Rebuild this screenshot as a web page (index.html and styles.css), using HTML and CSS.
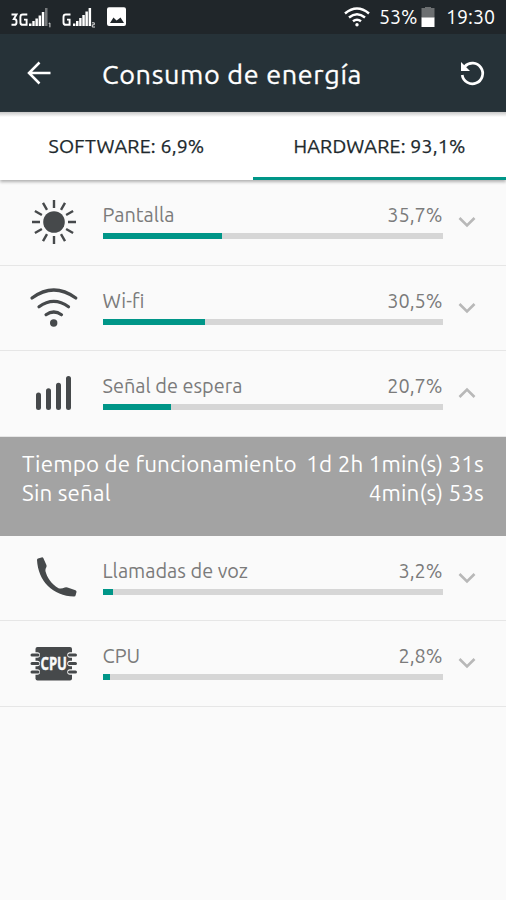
FILE: index.html
```html
<!DOCTYPE html>
<html lang="es">
<head>
<meta charset="utf-8">
<title>Consumo de energía</title>
<link rel="stylesheet" href="styles.css">
</head>
<body>
<div class="status">
  <svg class="signals" width="130" height="34" viewBox="0 0 130 34" fill="#fff">
    <g fill="none" stroke="#fff" stroke-width="1.9">
      <path d="M11.500 14.500h5L13.800 19q2.700 0 2.700 2.200v1.200q0 2.400-2.200 2.400h-2.800M27.300 14.500h-4.500q-2.400 0-2.400 2.400v5.500q0 2.400 2.400 2.400h3.800v-5.200h-2.600"/>
      <path d="M70.500 14.500h-4.600q-2.400 0-2.400 2.400v5.500q0 2.400 2.400 2.400h3.700v-5.200h-2.600"/>
    </g>
    <path d="M29 23.500h2.500V26H29zM32.300 21h2.400v5h-2.400zM35.400 18.500h2.500V26h-2.500zM38.600 15.500h2.500V26h-2.500zM41.800 12h2.500v14h-2.500z"/>
    <path d="M45 8h2.500v18H45z" fill="#777a7c"/>
    <path d="M73 23.500h2.400V26H73zM76 21h2.500v5H76zM79.200 18h2.400v8h-2.400zM82.300 15h2.500v11h-2.500zM85.400 11.500h2.500V26h-2.500zM88.600 8h2.500v18h-2.500z"/>
    <path d="M48.700 23.500l1.200-.5V27.300M92 22.800h2.300v2h-2V27h2.700" fill="none" stroke="#ddd"/>
    <path fill-rule="evenodd" d="M109 7.300h15q2 0 2 2V24q0 2-2 2h-15q-2 0-2-2V9.300q0-2 2-2zM110 23h14l-3.500-5.500-2.500 2-1.500 1-3-3z"/>
  </svg>
  <svg class="status-wifi" width="26" height="20" viewBox="0 0 26 20" fill="none" stroke="#fff" stroke-width="2.500">
    <path d="M1 6.500Q13-3.500 25 6.500M5 10.500q8-6.500 16 0M9 14.300q4-3.200 8 0"/><circle cx="13" cy="17.700" r="1.700" fill="#fff" stroke="none"/>
  </svg>
  <span class="battery-text">53%</span>
  <svg class="battery" width="14" height="22" viewBox="0 0 14 22"><path fill="#6c6f71" d="M4 1h6v1h3.500v10H.5V2H4z"/><path fill="#fff" d="M.5 11.500h13V21H.5z"/></svg>
  <span class="clock">19:30</span>
</div>
<header class="bar">
  <svg class="back" width="24" height="24" viewBox="0 0 24 24" fill="none" stroke="#fff" stroke-width="2.500"><path d="M23.500 12H2.500M12.500 1.500L2 12l10.500 10.500"/></svg>
  <h1 class="title">Consumo de energía</h1>
  <svg class="reset" width="26" height="26" viewBox="0 0 26 26"><path d="M5.800 6.500A10.300 10.300 0 1 1 3.200 15" fill="none" stroke="#fff" stroke-width="2.700"/><path fill="#fff" d="M2 2v9h9z"/></svg>
</header>
<nav class="tabs">
  <div class="tab"><span>SOFTWARE: 6,9%</span></div>
  <div class="tab active"><span>HARDWARE: 93,1%</span></div>
</nav>
<main>
  <section class="row">
    <svg class="icon" width="48" height="48" viewBox="0 0 48 48" stroke="#46494b" stroke-width="2.400"><circle cx="24" cy="24" r="10.800" fill="#46494b" stroke="none"/>
      <path d="M24 2v8M24 38v8M2 24h8M38 24h8M13 4.900l4 7M31 36.100l4 7M4.900 13l7 4M36.100 31l7 4M4.900 35l7-4M36.100 17l7-4M13 43.100l4-7M31 11.900l4-7"/></svg>
    <div class="body"><div class="line"><span>Pantalla</span><span>35,7%</span></div><div class="track"><div class="fill" style="width:35.2%"></div></div></div>
    <svg class="chev" width="18" height="12" viewBox="0 0 18 12"><path d="M1.500 2L9 9.500 16.500 2"/></svg>
  </section>
  <section class="row">
    <svg class="icon" width="48" height="48" viewBox="0 0 48 48" fill="none" stroke="#46494b" stroke-width="3.200" stroke-linecap="round"><path d="M2 14Q23.700-2 45.800 14M9 22.700q14.800-10.600 29.500 0M16 30.700q7.800-5.400 15.500 0"/><circle cx="23.700" cy="39" r="3.700" fill="#46494b" stroke="none"/></svg>
    <div class="body"><div class="line"><span>Wi-fi</span><span>30,5%</span></div><div class="track"><div class="fill" style="width:30.1%"></div></div></div>
    <svg class="chev" width="18" height="12" viewBox="0 0 18 12"><path d="M1.500 2L9 9.500 16.500 2"/></svg>
  </section>
  <section class="row">
    <svg class="icon" width="48" height="48" viewBox="0 0 48 48" stroke="#46494b" stroke-width="5" stroke-linecap="round"><path d="M8.500 26V38.500M18.500 21.700V38.500M28.500 16.200V38.500M38.500 9.500V38.500"/></svg>
    <div class="body"><div class="line"><span>Señal de espera</span><span>20,7%</span></div><div class="track"><div class="fill" style="width:20.2%"></div></div></div>
    <svg class="chev up" width="18" height="12" viewBox="0 0 18 12"><path d="M1.500 2L9 9.500 16.500 2"/></svg>
  </section>
  <div class="details">
    <div class="detail"><span>Tiempo de funcionamiento</span><span>1d 2h 1min(s) 31s</span></div>
    <div class="detail"><span>Sin señal</span><span>4min(s) 53s</span></div>
  </div>
  <section class="row">
    <svg class="icon" width="48" height="48" viewBox="0 0 48 48" fill="#46494b"><path d="M8 4.500Q7 4.500 7 6C8 27 23 42 44 42.500Q45.500 42.500 45.700 41L46.500 38Q46.700 36.700 45.500 36.200L37.500 33.500Q36 33 34.800 33.600Q31.500 35 28.500 34.200C21 30 17 23 15.400 17Q15.200 15 16.500 12.800Q16.800 11.800 16.300 10.800L13.300 4Q12.700 3 11.500 3.400z"/></svg>
    <div class="body"><div class="line"><span>Llamadas de voz</span><span>3,2%</span></div><div class="track"><div class="fill" style="width:3.1%"></div></div></div>
    <svg class="chev" width="18" height="12" viewBox="0 0 18 12"><path d="M1.500 2L9 9.500 16.500 2"/></svg>
  </section>
  <section class="row">
    <svg class="icon" width="48" height="48" viewBox="0 0 48 48"><rect x="5.500" y="8" width="36.500" height="33.500" rx="2" fill="#46494b"/>
      <path d="M2.300 16h5M2.300 24.500h5M2.300 33h5M40 16h5M40 24.500h5M40 33h5" stroke="#fafafa" stroke-width="5.500" stroke-linecap="round"/>
      <path d="M2 16h6M2 24.500h6M2 33h6M39.500 16h6M39.500 24.500h6M39.500 33h6" stroke="#46494b" stroke-width="3" stroke-linecap="round"/>
      <text x="10.500" y="31.200" textLength="26.500" lengthAdjust="spacingAndGlyphs" class="cpu">CPU</text></svg>
    <div class="body"><div class="line"><span>CPU</span><span>2,8%</span></div><div class="track"><div class="fill" style="width:2.2%"></div></div></div>
    <svg class="chev" width="18" height="12" viewBox="0 0 18 12"><path d="M1.500 2L9 9.500 16.500 2"/></svg>
  </section>
</main>
</body>
</html>
```
FILE: styles.css
```css
* { box-sizing: border-box; }
body { margin: 0; min-height: 900px; background: #fafafa; font-family: Ubuntu, "Noto Sans", sans-serif; white-space: nowrap; }
svg { display: block; flex: none; overflow: visible; }
.status { height: 34px; display: flex; align-items: center; background: #20262a; color: #fff; font-size: 19.6px; line-height: 34px; }
.status-wifi { margin: 0 9px 0 auto; }
.battery-text { width: 38px; }
.battery { margin: 0 11px 0 4px; }
.clock { width: 60px; }
.bar { height: 78px; display: flex; align-items: center; background: #263238; color: #fff; }
.back { margin-left: 27px; }
.title { margin: 0 auto 0 51px; padding-top: 1px; font-size: 27px; font-weight: 400; line-height: 40px; letter-spacing: .65px; -webkit-text-stroke: .3px; }
.reset { margin-right: 21px; }
.tabs { position: relative; height: 68px; display: grid; grid-template-columns: 1fr 1fr; background: linear-gradient(#c8c8c8, #fff 5px); color: #20282c; box-shadow: 0 2px 3px #b0b0b0; }
.tab { display: flex; align-items: center; justify-content: center; font-size: 19.5px; letter-spacing: .2px; -webkit-text-stroke: .25px; }
.active { border-bottom: 3px solid #009688; padding-top: 3px; }
.row { height: 85.5px; display: grid; grid-template-columns: 102.5px 340px 63.5px; align-items: center; border-bottom: 1px solid #e6e6e6; }
.icon { margin-left: 29.5px; }
.body { padding-bottom: 3px; }
.line { display: flex; justify-content: space-between; height: 29px; font-size: 19.9px; line-height: 25px; color: #7b7b7b; }
.track { height: 6px; margin-top: 2px; background: #d6d6d6; }
.fill { height: 100%; background: #009688; }
.chev { margin-left: 15px; fill: none; stroke: #b8b8b8; stroke-width: 2.6px; }
.up { transform: rotate(180deg); }
.details { height: 99px; padding: 12px 22px 0; background: #a3a3a3; color: #fff; font-size: 22.4px; letter-spacing: .15px; line-height: 29.5px; }
.detail { display: flex; justify-content: space-between; }
.cpu { font: bold 18.5px "Noto Sans", sans-serif; fill: #fafafa; stroke: #fafafa; stroke-width: .4px; }
```
